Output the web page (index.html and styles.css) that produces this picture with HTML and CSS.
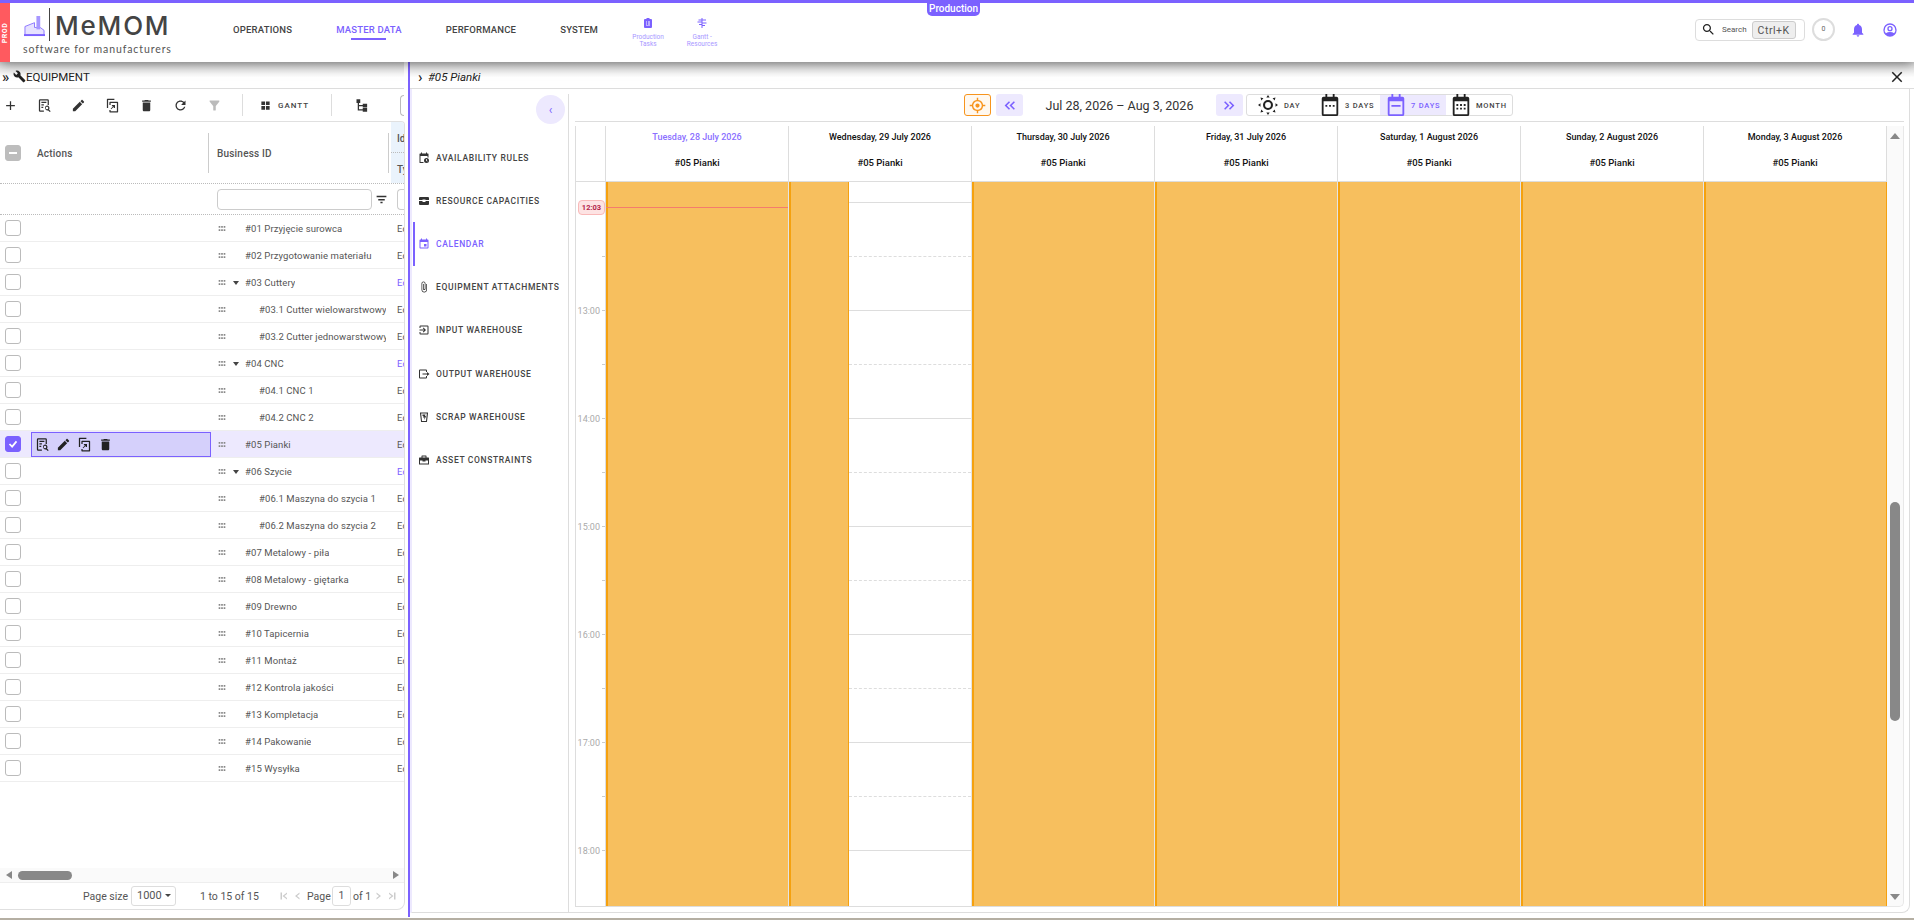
FILE: index.html
```html
<!DOCTYPE html>
<html lang="en">
<head>
    <meta charset="UTF-8">
    <title>MeMOM - Equipment</title>
    <link rel="stylesheet" href="styles.css">
</head>
<body>
    <svg class="sprite" xmlns="http://www.w3.org/2000/svg">
        <symbol id="i-add" viewBox="0 0 24 24"><path d="M19 13h-6v6h-2v-6H5v-2h6V5h2v6h6v2z"/></symbol>
        <symbol id="i-view" viewBox="0 0 24 24"><path d="M5 2h12a2 2 0 0 1 2 2v7h-2V4H5v16h6v2H5a2 2 0 0 1-2-2V4a2 2 0 0 1 2-2zm2 4h8v2H7zm0 4h4v2H7zm0 4h3v2H7z"/><path d="M16 12a4 4 0 0 1 3.2 6.4l2.7 2.7-1.4 1.4-2.7-2.7A4 4 0 1 1 16 12zm0 2a2 2 0 1 0 0 4 2 2 0 0 0 0-4z"/></symbol>
        <symbol id="i-edit" viewBox="0 0 24 24"><path d="M3 17.25V21h3.75L17.81 9.94l-3.75-3.75L3 17.25zM20.71 7.04c.39-.39.39-1.02 0-1.41l-2.34-2.34c-.39-.39-1.02-.39-1.41 0l-1.83 1.83 3.75 3.75 1.83-1.83z"/></symbol>
        <symbol id="i-copy" viewBox="0 0 24 24"><path d="M4 1h11v2H5v13H3V2a1 1 0 0 1 1-1zm4 5h12a1 1 0 0 1 1 1v15a1 1 0 0 1-1 1H8a1 1 0 0 1-1-1v-3h2v2h10V8H9v3H7V7a1 1 0 0 1 1-1zm3 5h5v5h-2v-2l-4 4-1-1 4-4h-2z"/></symbol>
        <symbol id="i-delete" viewBox="0 0 24 24"><path d="M6 19c0 1.1.9 2 2 2h8c1.1 0 2-.9 2-2V7H6v12zM19 4h-3.5l-1-1h-5l-1 1H5v2h14V4z"/></symbol>
        <symbol id="i-refresh" viewBox="0 0 24 24"><path d="M17.65 6.35C16.2 4.9 14.21 4 12 4c-4.42 0-7.99 3.58-7.99 8s3.57 8 7.99 8c3.73 0 6.84-2.55 7.73-6h-2.08c-.82 2.33-3.04 4-5.65 4-3.31 0-6-2.69-6-6s2.69-6 6-6c1.66 0 3.14.69 4.22 1.78L13 11h7V4l-2.35 2.35z"/></symbol>
        <symbol id="i-funnel" viewBox="0 0 24 24"><path d="M4.25 5.61C6.27 8.2 10 13 10 13v6c0 .55.45 1 1 1h2c.55 0 1-.45 1-1v-6s3.72-4.8 5.74-7.39A.998.998 0 0 0 18.95 4H5.04c-.83 0-1.3.95-.79 1.61z"/></symbol>
        <symbol id="i-filter" viewBox="0 0 24 24"><path d="M10 19h4v-3h-4v3zM3 5v3h18V5H3zm3 9h12v-3H6v3z"/></symbol>
        <symbol id="i-grid" viewBox="0 0 24 24"><path d="M3 3h8v8H3zM13 3h8v8h-8zM3 13h8v8H3zM13 13h8v8h-8z"/></symbol>
        <symbol id="i-tree" viewBox="0 0 24 24"><path d="M4 2h6v6H8v3h6V9h7v6h-7v-2H8v5h6v-2h7v6h-7v-2H6V8H4z"/></symbol>
        <symbol id="i-wrench" viewBox="0 0 24 24"><path d="M22.7 19l-9.1-9.1c.9-2.3.4-5-1.5-6.9-2-2-5-2.4-7.4-1.3L9 6 6 9 1.6 4.7C.4 7.1.9 10.1 2.9 12.1c1.9 1.9 4.6 2.4 6.9 1.5l9.1 9.1c.4.4 1 .4 1.4 0l2.3-2.3c.5-.4.5-1.1.1-1.4z"/></symbol>
        <symbol id="i-bell" viewBox="0 0 24 24"><path d="M12 22c1.1 0 2-.9 2-2h-4c0 1.1.89 2 2 2zm6-6v-5c0-3.07-1.64-5.64-4.5-6.32V4c0-.83-.67-1.5-1.5-1.5s-1.5.67-1.5 1.5v.68C7.63 5.36 6 7.92 6 11v5l-2 2v1h16v-1l-2-2z"/></symbol>
        <symbol id="i-search" viewBox="0 0 24 24"><path d="M15.5 14h-.79l-.28-.27C15.41 12.59 16 11.11 16 9.5 16 5.91 13.09 3 9.5 3S3 5.91 3 9.5 5.91 16 9.5 16c1.61 0 3.09-.59 4.23-1.57l.27.28v.79l5 4.99L20.49 19l-4.99-5zm-6 0C7.01 14 5 11.99 5 9.5S7.01 5 9.5 5 14 7.01 14 9.5 11.99 14 9.5 14z"/></symbol>
        <symbol id="i-user" viewBox="0 0 24 24"><path d="M12 2a10 10 0 1 0 0 20 10 10 0 0 0 0-20zm0 2a8 8 0 0 1 6.2 13A10 10 0 0 0 12 15a10 10 0 0 0-6.2 2A8 8 0 0 1 12 4zm0 2a4 4 0 1 0 0 8 4 4 0 0 0 0-8zm0 2a2 2 0 1 1 0 4 2 2 0 0 1 0-4z"/></symbol>
        <symbol id="i-clipboard" viewBox="0 0 24 24"><path d="M9 2h6v2h3a2 2 0 0 1 2 2v14a2 2 0 0 1-2 2H6a2 2 0 0 1-2-2V6a2 2 0 0 1 2-2h3zM8 9v2h2V9zm4 0v2h4V9zm-4 4v2h2v-2zm4 0v2h4v-2zm-4 4v1h8v-1z"/></symbol>
        <symbol id="i-gantt" viewBox="0 0 24 24"><path d="M11 2h2v20h-2V16H6v-2h5v-3H3V9h8V7H5V5h6zm2 3h7v2h-7zm0 6h8v2h-8zm0 5h5v2h-5z"/></symbol>
        <symbol id="i-target" viewBox="0 0 24 24"><path d="M11 1h2v3.100A8 8 0 0 1 19.900 11H23v2h-3.100A8 8 0 0 1 13 19.900V23h-2v-3.100A8 8 0 0 1 4.100 13H1v-2h3.100A8 8 0 0 1 11 4.100zm1 5a6 6 0 1 0 0 12 6 6 0 0 0 0-12zm0 3a3 3 0 1 1 0 6 3 3 0 0 1 0-6z"/></symbol>
        <symbol id="i-sun" viewBox="0 0 24 24"><path d="M12 6a6 6 0 1 1 0 12 6 6 0 0 1 0-12zm0 2.500a3.500 3.500 0 1 0 0 7 3.500 3.500 0 0 0 0-7zM12 0l2 3h-4zm0 24l-2-3h4zM0 12l3-2v4zm24 0l-3 2v-4zM3 3l3.500 1-2.500 2.500zm18 0l-1 3.500L17.500 4zM3 21l1-3.500L6.500 20zm18 0l-3.500-1 2.500-2.500z"/></symbol>
        <symbol id="i-cal3" viewBox="0 0 24 24"><path d="M7 0h2v3h6V0h2v3h2a2 2 0 0 1 2 2v17a2 2 0 0 1-2 2H5a2 2 0 0 1-2-2V5a2 2 0 0 1 2-2h2zM5 8v14h14V8zm2 4h2v2H7zm4 0h2v2h-2zm4 0h2v2h-2z"/></symbol>
        <symbol id="i-cal7" viewBox="0 0 24 24"><path d="M7 0h2v3h6V0h2v3h2a2 2 0 0 1 2 2v17a2 2 0 0 1-2 2H5a2 2 0 0 1-2-2V5a2 2 0 0 1 2-2h2zM5 8v14h14V8zm2 4h10v2H7z"/></symbol>
        <symbol id="i-calm" viewBox="0 0 24 24"><path d="M7 0h2v3h6V0h2v3h2a2 2 0 0 1 2 2v17a2 2 0 0 1-2 2H5a2 2 0 0 1-2-2V5a2 2 0 0 1 2-2h2zM5 8v14h14V8zm2 3h2v2H7zm4 0h2v2h-2zm4 0h2v2h-2zm-8 4h2v2H7zm4 0h2v2h-2zm4 0h2v2h-2z"/></symbol>
        <symbol id="i-rules" viewBox="0 0 24 24"><path d="M6 1h2v2h8V1h2v2h2a1 1 0 0 1 1 1v7h-2V8H5v12h6v2H4a1 1 0 0 1-1-1V4a1 1 0 0 1 1-1h2zm11 11a5 5 0 1 1 0 10 5 5 0 0 1 0-10zm-1 2v3.500l2.500 1.500.8-1.200-1.800-1V14z"/></symbol>
        <symbol id="i-capacity" viewBox="0 0 24 24"><path d="M4 4h16a2 2 0 0 1 2 2v4h-7v-1H9v1H2V6a2 2 0 0 1 2-2zM2 12h7v2h6v-2h7v6a2 2 0 0 1-2 2H4a2 2 0 0 1-2-2z"/></symbol>
        <symbol id="i-event" viewBox="0 0 24 24"><path d="M17 12h-5v5h5v-5zM16 1v2H8V1H6v2H5c-1.110 0-2 .9-2 2v14c0 1.100.89 2 2 2h14c1.100 0 2-.9 2-2V5c0-1.100-.9-2-2-2h-1V1h-2zm3 18H5V8h14v11z"/></symbol>
        <symbol id="i-clip" viewBox="0 0 24 24"><path d="M16.500 6v11.500c0 2.210-1.790 4-4 4s-4-1.790-4-4V5c0-1.380 1.120-2.500 2.500-2.500s2.500 1.120 2.500 2.500v10.500c0 .55-.45 1-1 1s-1-.45-1-1V6H10v9.500c0 1.380 1.120 2.500 2.500 2.500s2.500-1.120 2.500-2.500V5c0-2.210-1.790-4-4-4S7 2.790 7 5v12.500c0 3.040 2.460 5.500 5.500 5.500s5.500-2.460 5.500-5.500V6h-1.500z"/></symbol>
        <symbol id="i-input" viewBox="0 0 24 24"><path d="M5 3h14a2 2 0 0 1 2 2v14a2 2 0 0 1-2 2H5a2 2 0 0 1-2-2v-3h2v3h14V5H5v3H3V5a2 2 0 0 1 2-2zm6 4l5 5-5 5-1.400-1.400L12.200 13H3v-2h9.200L9.600 8.400z"/></symbol>
        <symbol id="i-output" viewBox="0 0 24 24"><path d="M4 3h12a2 2 0 0 1 2 2v3h-2V5H4v14h12v-3h2v3a2 2 0 0 1-2 2H4a2 2 0 0 1-2-2V5a2 2 0 0 1 2-2zm14 5l5 4-5 4v-3H9v-2h9z"/></symbol>
        <symbol id="i-scrap" viewBox="0 0 24 24"><path d="M4 3h16v2l-2 16a1 1 0 0 1-1 1H7a1 1 0 0 1-1-1L4 5zm2.300 2L8 20h8l1.700-15zM9 7h6l-1 3h2l-1 3-3 5 1-5h-3l1-3h-2z"/></symbol>
        <symbol id="i-asset" viewBox="0 0 24 24"><path d="M8 3h8a1 1 0 0 1 1 1v3h4a1 1 0 0 1 1 1v13H2V8a1 1 0 0 1 1-1h4V4a1 1 0 0 1 1-1zm1 2v2h6V5zM4 13v6h16v-6h-5v2H9v-2z"/></symbol>
        <symbol id="i-grip" viewBox="0 0 8 6"><path d="M0 0h2v2H0zM3 0h2v2H3zM6 0h2v2H6zM0 4h2v2H0zM3 4h2v2H3zM6 4h2v2H6z"/></symbol>
        <symbol id="i-close" viewBox="0 0 24 24"><path d="M19 6.410L17.590 5 12 10.590 6.410 5 5 6.410 10.590 12 5 17.590 6.410 19 12 13.410 17.590 19 19 17.590 13.410 12z"/></symbol>
        <symbol id="i-dbl-left" viewBox="0 0 24 24"><path d="M11 4l-8 8 8 8 2-2-6-6 6-6zM20 4l-8 8 8 8 2-2-6-6 6-6z"/></symbol>
        <symbol id="i-dbl-right" viewBox="0 0 24 24"><path d="M4 4l8 8-8 8-2-2 6-6-6-6zM13 4l8 8-8 8-2-2 6-6-6-6z"/></symbol>
        <symbol id="i-first" viewBox="0 0 24 24"><path d="M5 5h3v14H5zM18 5v3l-5 4 5 4v3l-9-7z"/></symbol>
        <symbol id="i-prev" viewBox="0 0 24 24"><path d="M15 5v3l-5 4 5 4v3l-9-7z"/></symbol>
        <symbol id="i-next" viewBox="0 0 24 24"><path d="M9 5v3l5 4-5 4v3l9-7z"/></symbol>
        <symbol id="i-last" viewBox="0 0 24 24"><path d="M16 5h3v14h-3zM6 5v3l5 4-5 4v3l9-7z"/></symbol>
    </svg>

    <header class="topbar">
        <div class="env-strip"><span>PROD</span></div>
        <div class="logo">
            <div class="logo-top">
                <svg class="logo-mark" viewBox="0 0 22 22"><path d="M1 20V11l10-4v5h6l4 3v5z" fill="#e6e1ff" stroke="#8a74ff" stroke-width="1"/><path d="M13 0h4v14h-4z" fill="#a797ff"/><path d="M0 19h22v2H0z" fill="#7b61ff"/></svg>
                <span class="logo-name">MeMOM</span>
            </div>
            <div class="logo-sub">software for manufacturers</div>
        </div>
        <nav class="main-nav">
            <a class="nav-link">OPERATIONS</a>
            <a class="nav-link nav-active">MASTER DATA</a>
            <a class="nav-link">PERFORMANCE</a>
            <a class="nav-link">SYSTEM</a>
        </nav>
        <div class="quick-links">
            <a class="quick-link"><svg><use href="#i-clipboard"/></svg><span>Production<br>Tasks</span></a>
            <a class="quick-link"><svg><use href="#i-gantt"/></svg><span>Gantt -<br>Resources</span></a>
        </div>
        <div class="env-tag">Production</div>
        <div class="top-right">
            <div class="search-box">
                <svg><use href="#i-search"/></svg>
                <span class="search-label">Search</span>
                <span class="kbd">Ctrl+K</span>
            </div>
            <div class="count-badge">0</div>
            <svg class="top-icon"><use href="#i-bell"/></svg>
            <svg class="top-icon"><use href="#i-user"/></svg>
        </div>
    </header>

    <main class="workspace">
        <section class="left-panel">
            <div class="panel-title">
                <span class="title-arrows">»</span>
                <svg class="title-icon"><use href="#i-wrench"/></svg>
                <span>EQUIPMENT</span>
            </div>
            <div class="toolbar">
                <svg class="tool tool-add"><use href="#i-add"/></svg>
                <svg class="tool"><use href="#i-view"/></svg>
                <svg class="tool"><use href="#i-edit"/></svg>
                <svg class="tool"><use href="#i-copy"/></svg>
                <svg class="tool"><use href="#i-delete"/></svg>
                <svg class="tool"><use href="#i-refresh"/></svg>
                <svg class="tool tool-off"><use href="#i-funnel"/></svg>
                <span class="tool-sep"></span>
                <div class="tool-gantt"><svg><use href="#i-grid"/></svg><span>GANTT</span></div>
                <span class="tool-sep"></span>
                <svg class="tool tool-tree"><use href="#i-tree"/></svg>
                <span class="tool-cut"></span>
            </div>

            <div class="grid">
                <div class="grid-head">
                    <div class="col-check"><span class="check check-mixed"></span></div>
                    <div class="col-actions head-cell">Actions</div>
                    <div class="col-name head-cell">Business ID</div>
                    <div class="col-type head-split"><span>Id</span><span>Ty</span></div>
                </div>
                <div class="grid-filter">
                    <input class="filter-input" type="text">
                    <svg class="filter-icon"><use href="#i-filter"/></svg>
                    <span class="filter-cut"></span>
                </div>
                <div class="grid-rows">
                    <div class="row"><div class="col-check"><span class="check"></span></div><div class="col-actions"></div><div class="col-name"><svg class="grip"><use href="#i-grip"/></svg><span class="caret-slot"></span><span class="name">#01 Przyjęcie surowca</span></div><div class="col-type">Equipment</div></div>
                    <div class="row"><div class="col-check"><span class="check"></span></div><div class="col-actions"></div><div class="col-name"><svg class="grip"><use href="#i-grip"/></svg><span class="caret-slot"></span><span class="name">#02 Przygotowanie materiału</span></div><div class="col-type">Equipment</div></div>
                    <div class="row"><div class="col-check"><span class="check"></span></div><div class="col-actions"></div><div class="col-name"><svg class="grip"><use href="#i-grip"/></svg><span class="caret-slot caret"></span><span class="name">#03 Cuttery</span></div><div class="col-type type-parent">Equipment</div></div>
                    <div class="row"><div class="col-check"><span class="check"></span></div><div class="col-actions"></div><div class="col-name"><svg class="grip"><use href="#i-grip"/></svg><span class="caret-slot"></span><span class="name name-child">#03.1 Cutter wielowarstwowy</span></div><div class="col-type">Equipment</div></div>
                    <div class="row"><div class="col-check"><span class="check"></span></div><div class="col-actions"></div><div class="col-name"><svg class="grip"><use href="#i-grip"/></svg><span class="caret-slot"></span><span class="name name-child">#03.2 Cutter jednowarstwowy</span></div><div class="col-type">Equipment</div></div>
                    <div class="row"><div class="col-check"><span class="check"></span></div><div class="col-actions"></div><div class="col-name"><svg class="grip"><use href="#i-grip"/></svg><span class="caret-slot caret"></span><span class="name">#04 CNC</span></div><div class="col-type type-parent">Equipment</div></div>
                    <div class="row"><div class="col-check"><span class="check"></span></div><div class="col-actions"></div><div class="col-name"><svg class="grip"><use href="#i-grip"/></svg><span class="caret-slot"></span><span class="name name-child">#04.1 CNC 1</span></div><div class="col-type">Equipment</div></div>
                    <div class="row"><div class="col-check"><span class="check"></span></div><div class="col-actions"></div><div class="col-name"><svg class="grip"><use href="#i-grip"/></svg><span class="caret-slot"></span><span class="name name-child">#04.2 CNC 2</span></div><div class="col-type">Equipment</div></div>
                    <div class="row row-selected">
                        <div class="col-check"><span class="check check-on"><svg viewBox="0 0 16 16"><path d="M4 8l3 3 5-6" fill="none" stroke="#fff" stroke-width="2"/></svg></span></div>
                        <div class="col-actions">
                            <div class="row-tools">
                                <svg><use href="#i-view"/></svg>
                                <svg><use href="#i-edit"/></svg>
                                <svg><use href="#i-copy"/></svg>
                                <svg><use href="#i-delete"/></svg>
                            </div>
                        </div>
                        <div class="col-name"><svg class="grip"><use href="#i-grip"/></svg><span class="caret-slot"></span><span class="name">#05 Pianki</span></div>
                        <div class="col-type">Equipment</div>
                    </div>
                    <div class="row"><div class="col-check"><span class="check"></span></div><div class="col-actions"></div><div class="col-name"><svg class="grip"><use href="#i-grip"/></svg><span class="caret-slot caret"></span><span class="name">#06 Szycie</span></div><div class="col-type type-parent">Equipment</div></div>
                    <div class="row"><div class="col-check"><span class="check"></span></div><div class="col-actions"></div><div class="col-name"><svg class="grip"><use href="#i-grip"/></svg><span class="caret-slot"></span><span class="name name-child">#06.1 Maszyna do szycia 1</span></div><div class="col-type">Equipment</div></div>
                    <div class="row"><div class="col-check"><span class="check"></span></div><div class="col-actions"></div><div class="col-name"><svg class="grip"><use href="#i-grip"/></svg><span class="caret-slot"></span><span class="name name-child">#06.2 Maszyna do szycia 2</span></div><div class="col-type">Equipment</div></div>
                    <div class="row"><div class="col-check"><span class="check"></span></div><div class="col-actions"></div><div class="col-name"><svg class="grip"><use href="#i-grip"/></svg><span class="caret-slot"></span><span class="name">#07 Metalowy - piła</span></div><div class="col-type">Equipment</div></div>
                    <div class="row"><div class="col-check"><span class="check"></span></div><div class="col-actions"></div><div class="col-name"><svg class="grip"><use href="#i-grip"/></svg><span class="caret-slot"></span><span class="name">#08 Metalowy - giętarka</span></div><div class="col-type">Equipment</div></div>
                    <div class="row"><div class="col-check"><span class="check"></span></div><div class="col-actions"></div><div class="col-name"><svg class="grip"><use href="#i-grip"/></svg><span class="caret-slot"></span><span class="name">#09 Drewno</span></div><div class="col-type">Equipment</div></div>
                    <div class="row"><div class="col-check"><span class="check"></span></div><div class="col-actions"></div><div class="col-name"><svg class="grip"><use href="#i-grip"/></svg><span class="caret-slot"></span><span class="name">#10 Tapicernia</span></div><div class="col-type">Equipment</div></div>
                    <div class="row"><div class="col-check"><span class="check"></span></div><div class="col-actions"></div><div class="col-name"><svg class="grip"><use href="#i-grip"/></svg><span class="caret-slot"></span><span class="name">#11 Montaż</span></div><div class="col-type">Equipment</div></div>
                    <div class="row"><div class="col-check"><span class="check"></span></div><div class="col-actions"></div><div class="col-name"><svg class="grip"><use href="#i-grip"/></svg><span class="caret-slot"></span><span class="name">#12 Kontrola jakości</span></div><div class="col-type">Equipment</div></div>
                    <div class="row"><div class="col-check"><span class="check"></span></div><div class="col-actions"></div><div class="col-name"><svg class="grip"><use href="#i-grip"/></svg><span class="caret-slot"></span><span class="name">#13 Kompletacja</span></div><div class="col-type">Equipment</div></div>
                    <div class="row"><div class="col-check"><span class="check"></span></div><div class="col-actions"></div><div class="col-name"><svg class="grip"><use href="#i-grip"/></svg><span class="caret-slot"></span><span class="name">#14 Pakowanie</span></div><div class="col-type">Equipment</div></div>
                    <div class="row"><div class="col-check"><span class="check"></span></div><div class="col-actions"></div><div class="col-name"><svg class="grip"><use href="#i-grip"/></svg><span class="caret-slot"></span><span class="name">#15 Wysyłka</span></div><div class="col-type">Equipment</div></div>
                </div>
                <div class="hscroll">
                    <span class="arrow-left"></span>
                    <span class="hscroll-thumb"></span>
                    <span class="arrow-right"></span>
                </div>
                <div class="pager">
                    <span class="pager-label">Page size</span>
                    <span class="pager-select">1000 <i class="pager-caret"></i></span>
                    <span class="pager-count">1 to 15 of 15</span>
                    <svg class="pager-nav pager-first"><use href="#i-first"/></svg>
                    <svg class="pager-nav"><use href="#i-prev"/></svg>
                    <span class="pager-page">Page</span>
                    <span class="pager-input">1</span>
                    <span class="pager-of">of 1</span>
                    <svg class="pager-nav"><use href="#i-next"/></svg>
                    <svg class="pager-nav"><use href="#i-last"/></svg>
                </div>
            </div>
        </section>

        <section class="right-panel">
            <div class="detail-title">
                <span class="detail-arrow">›</span>
                <em>#05 Pianki</em>
                <svg class="detail-close"><use href="#i-close"/></svg>
            </div>
            <div class="detail-body">
                <aside class="side-menu">
                    <button class="collapse-btn">‹</button>
                    <a class="menu-item"><svg><use href="#i-rules"/></svg>AVAILABILITY RULES</a>
                    <a class="menu-item"><svg><use href="#i-capacity"/></svg>RESOURCE CAPACITIES</a>
                    <a class="menu-item menu-active"><svg><use href="#i-event"/></svg>CALENDAR</a>
                    <a class="menu-item"><svg><use href="#i-clip"/></svg>EQUIPMENT ATTACHMENTS</a>
                    <a class="menu-item"><svg><use href="#i-input"/></svg>INPUT WAREHOUSE</a>
                    <a class="menu-item"><svg><use href="#i-output"/></svg>OUTPUT WAREHOUSE</a>
                    <a class="menu-item"><svg><use href="#i-scrap"/></svg>SCRAP WAREHOUSE</a>
                    <a class="menu-item"><svg><use href="#i-asset"/></svg>ASSET CONSTRAINTS</a>
                </aside>

                <div class="calendar-area">
                    <div class="cal-toolbar">
                        <button class="today-btn"><svg><use href="#i-target"/></svg></button>
                        <button class="step-btn"><svg><use href="#i-dbl-left"/></svg></button>
                        <span class="cal-range">Jul 28, 2026 – Aug 3, 2026</span>
                        <button class="step-btn"><svg><use href="#i-dbl-right"/></svg></button>
                        <div class="view-group">
                            <span class="view-opt view-day"><svg><use href="#i-sun"/></svg>DAY</span>
                            <span class="view-opt view-three"><svg><use href="#i-cal3"/></svg>3 DAYS</span>
                            <span class="view-opt view-seven"><svg><use href="#i-cal7"/></svg>7 DAYS</span>
                            <span class="view-opt view-month"><svg><use href="#i-calm"/></svg>MONTH</span>
                        </div>
                    </div>

                    <div class="cal">
                        <div class="cal-main">
                            <div class="cal-head">
                                <div class="time-head"></div>
                                <div class="day-head day-today"><span>Tuesday, 28 July 2026</span><b>#05 Pianki</b></div>
                                <div class="day-head"><span>Wednesday, 29 July 2026</span><b>#05 Pianki</b></div>
                                <div class="day-head"><span>Thursday, 30 July 2026</span><b>#05 Pianki</b></div>
                                <div class="day-head"><span>Friday, 31 July 2026</span><b>#05 Pianki</b></div>
                                <div class="day-head"><span>Saturday, 1 August 2026</span><b>#05 Pianki</b></div>
                                <div class="day-head"><span>Sunday, 2 August 2026</span><b>#05 Pianki</b></div>
                                <div class="day-head"><span>Monday, 3 August 2026</span><b>#05 Pianki</b></div>
                            </div>
                            <div class="cal-body">
                                <div class="time-col">
                                    <div class="time-now">12:03</div>
                                    <div class="time-slot time-first"></div>
                                    <div class="time-slot"></div>
                                    <div class="time-slot"><span>13:00</span></div>
                                    <div class="time-slot"></div>
                                    <div class="time-slot"><span>14:00</span></div>
                                    <div class="time-slot"></div>
                                    <div class="time-slot"><span>15:00</span></div>
                                    <div class="time-slot"></div>
                                    <div class="time-slot"><span>16:00</span></div>
                                    <div class="time-slot"></div>
                                    <div class="time-slot"><span>17:00</span></div>
                                    <div class="time-slot"></div>
                                    <div class="time-slot"><span>18:00</span></div>
                                </div>
                                <div class="day-col"><div class="closed"><span class="now-line"></span></div></div>
                                <div class="day-col day-split">
                                    <div class="closed closed-short"></div>
                                    <div class="free">
                                        <div class="slot slot-first"></div>
                                        <div class="slot slot-half"></div>
                                        <div class="slot"></div>
                                        <div class="slot slot-half"></div>
                                        <div class="slot"></div>
                                        <div class="slot slot-half"></div>
                                        <div class="slot"></div>
                                        <div class="slot slot-half"></div>
                                        <div class="slot"></div>
                                        <div class="slot slot-half"></div>
                                        <div class="slot"></div>
                                        <div class="slot slot-half"></div>
                                        <div class="slot"></div>
                                    </div>
                                </div>
                                <div class="day-col"><div class="closed"></div></div>
                                <div class="day-col"><div class="closed"></div></div>
                                <div class="day-col"><div class="closed"></div></div>
                                <div class="day-col"><div class="closed"></div></div>
                                <div class="day-col day-last"><div class="closed closed-last"></div></div>
                            </div>
                        </div>
                        <div class="vscroll">
                            <span class="arrow-up"></span>
                            <span class="vscroll-thumb"></span>
                            <span class="arrow-down"></span>
                        </div>
                    </div>
                </div>
            </div>
        </section>
    </main>
    <div class="page-edge"></div>
</body>
</html>
```

FILE: styles.css
```css
* {
    margin: 0;
    padding: 0;
    box-sizing: border-box;
}

body {
    font-family: Roboto, "Liberation Sans", sans-serif;
    background-color: white;
    color: #444;
    height: 100vh;
    overflow: hidden;
    display: flex;
    flex-direction: column;
}

.sprite {
    display: none;
}

svg {
    fill: currentColor;
    flex-shrink: 0;
}

button {
    font-family: inherit;
    border: none;
    cursor: pointer;
}

/* top bar */
.topbar {
    position: relative;
    z-index: 2;
    height: 62px;
    flex-shrink: 0;
    display: flex;
    background-color: white;
    border-top: 3px solid #7b61ff;
    box-shadow: 0 1px 12px rgba(0, 0, 0, 0.55);
}

.env-strip {
    width: 10px;
    background-color: #ff5a5f;
    color: white;
    display: flex;
    align-items: center;
    justify-content: center;
}

.env-strip span {
    transform: rotate(-90deg);
    font-size: 7px;
    font-weight: 700;
    letter-spacing: 0.5px;
}

.logo {
    width: 223px;
    padding: 5px 0 0 13px;
}

.logo-top {
    display: flex;
    align-items: center;
    height: 33px;
}

.logo-mark {
    width: 21px;
    height: 21px;
    margin: 3px 4px 0 1px;
}

.logo-name {
    font-family: Inter, sans-serif;
    font-weight: 500;
    font-size: 26px;
    letter-spacing: 1.8px;
    color: #444;
    height: 33px;
    line-height: 35px;
    border-left: 1px solid #444;
    padding-left: 5px;
}

.logo-sub {
    font-family: Lato, sans-serif;
    font-size: 10.5px;
    letter-spacing: 0.9px;
    color: #555;
    margin-top: 2px;
    white-space: nowrap;
}

.main-nav {
    display: flex;
    gap: 44px;
}

.nav-link {
    position: relative;
    font-size: 9.5px;
    font-weight: 500;
    letter-spacing: 0.2px;
    line-height: 53px;
    color: #444;
    white-space: nowrap;
}

.nav-active {
    color: #7b61ff;
}

.nav-active::after {
    content: "";
    position: absolute;
    left: 15px;
    right: 16px;
    bottom: 22px;
    height: 2px;
    background-color: #7b61ff;
}

.quick-links {
    display: flex;
    margin-left: 25px;
    gap: 4px;
}

.quick-link {
    width: 50px;
    padding-top: 14px;
    display: flex;
    flex-direction: column;
    align-items: center;
    color: #7b61ff;
}

.quick-link svg {
    width: 12px;
    height: 12px;
}

.quick-link span {
    font-size: 6.5px;
    line-height: 7px;
    margin-top: 5px;
    text-align: center;
    color: #a897ff;
}

.env-tag {
    position: absolute;
    top: 0;
    left: 927px;
    width: 53px;
    height: 13px;
    line-height: 12px;
    text-align: center;
    font-size: 10px;
    font-weight: 500;
    color: white;
    background-color: #7b61ff;
    border-radius: 0 0 5px 5px;
}

.top-right {
    margin-left: auto;
    display: flex;
    align-items: center;
    height: 53px;
    padding: 0 16px 0 0;
}

.search-box {
    width: 110px;
    height: 22px;
    border: 1px solid #ddd;
    border-radius: 4px;
    display: flex;
    align-items: center;
    padding-left: 5px;
    color: #222;
}

.search-box svg {
    width: 15px;
    height: 15px;
}

.search-label {
    font-size: 8px;
    color: #555;
    margin-left: 6px;
}

.kbd {
    margin-left: 5px;
    width: 44px;
    height: 18px;
    line-height: 17px;
    text-align: center;
    font-size: 10.5px;
    letter-spacing: 0.5px;
    color: #555;
    background-color: #eee;
    border: 1px solid #ccc;
    border-radius: 3px;
}

.count-badge {
    width: 23px;
    height: 23px;
    margin-left: 7px;
    margin-right: -1px;
    border: 2px solid #ddd;
    border-radius: 50%;
    text-align: center;
    line-height: 19px;
    font-size: 7px;
    color: #666;
}

.top-icon {
    width: 16px;
    height: 16px;
    margin-left: 16px;
    color: #7b61ff;
}

/* main split */
.workspace {
    flex: 1;
    min-height: 0;
    display: flex;
}

.left-panel {
    width: 410px;
    flex-shrink: 0;
    display: flex;
    flex-direction: column;
    border-right: 2px solid #7b61ff;
    padding-right: 3px;
}

.panel-title {
    height: 27px;
    display: flex;
    align-items: center;
    font-size: 11.5px;
    color: #222;
    border-bottom: 1px solid #ddd;
    padding: 3px 0 0 2px;
    margin-right: 1px;
    background: linear-gradient(#dcdcdc, white 60%);
}

.title-arrows {
    width: 11px;
    font-size: 15px;
    font-weight: 500;
    line-height: 12px;
}

.title-icon {
    width: 13px;
    height: 13px;
    color: #222;
}

.toolbar {
    height: 32px;
    display: flex;
    align-items: center;
    padding-left: 3px;
    color: #333;
}

.tool {
    width: 15px;
    height: 15px;
    margin-right: 19px;
}

.tool-off {
    color: #bbb;
    margin-right: 20px;
}

.tool-sep {
    width: 1px;
    height: 22px;
    background-color: #ddd;
}

.tool-gantt {
    display: flex;
    align-items: center;
    padding-left: 17px;
    width: 88px;
    font-size: 8px;
    font-weight: 500;
    letter-spacing: 1px;
    color: #444;
}

.tool-gantt svg {
    width: 11px;
    height: 11px;
    margin-right: 7px;
    color: #333;
}

.tool-tree {
    margin: 0 0 0 22px;
}

.tool-cut {
    margin-left: 31px;
    width: 4px;
    height: 21px;
    flex-shrink: 0;
    border: 1px solid #bbb;
    border-right: none;
    border-radius: 4px 0 0 4px;
}

/* equipment grid */
.grid {
    flex: 1;
    min-height: 0;
    display: flex;
    flex-direction: column;
    border: 1px solid #e0e0e0;
    border-left: none;
    border-radius: 0 4px 8px 0;
    margin-bottom: 7px;
    overflow: hidden;
    font-size: 9.5px;
}

.grid-head {
    height: 62px;
    flex-shrink: 0;
    display: flex;
    align-items: center;
    border-bottom: 1px dotted #bbb;
}

.col-check {
    width: 31px;
    padding-left: 5px;
    flex-shrink: 0;
    display: flex;
    align-items: center;
}

.col-actions {
    width: 178px;
    flex-shrink: 0;
    height: 100%;
    display: flex;
    align-items: center;
}

.col-name {
    width: 180px;
    flex-shrink: 0;
    display: flex;
    align-items: center;
    padding: 0 3px 0 9px;
    overflow: hidden;
    white-space: nowrap;
    height: 100%;
    color: #555;
}

.name {
    min-width: 0;
    overflow: hidden;
}

.col-type {
    flex: 1;
    min-width: 0;
    padding-left: 8px;
    overflow: hidden;
    white-space: nowrap;
    color: #555;
}

.type-parent {
    color: #7b61ff;
}

.head-cell {
    height: 40px;
    font-weight: 500;
    font-size: 10px;
    letter-spacing: 0.2px;
    color: #555;
    padding-top: 2px;
    padding-left: 6px;
}

.head-cell.col-actions {
    border-right: 1px solid #ccc;
}

.head-cell.col-name {
    padding-left: 8px;
    border-right: 1px solid #ccc;
}

.head-split {
    align-self: stretch;
    background-color: #eaf3fc;
    font-weight: 500;
    font-size: 10px;
    display: flex;
    flex-direction: column;
    margin-left: 2px;
    padding-left: 6px;
}

.head-split span {
    height: 31px;
    line-height: 33px;
}

.head-split span:first-child {
    border-bottom: 1px dotted #bbb;
    margin-left: -6px;
    padding-left: 6px;
}

.check {
    width: 16px;
    height: 16px;
    flex-shrink: 0;
    display: block;
    border: 1px solid #bbb;
    border-radius: 3px;
    background-color: white;
}

.check-mixed {
    background-color: #bdbdbd;
    border-color: #bdbdbd;
    position: relative;
}

.check-mixed::after {
    content: "";
    position: absolute;
    left: 3px;
    right: 3px;
    top: 6px;
    height: 2px;
    background-color: white;
}

.check-on {
    background-color: #7b61ff;
    border-color: #7b61ff;
}

.check-on svg {
    display: block;
    width: 14px;
    height: 14px;
}

.grid-filter {
    height: 31px;
    flex-shrink: 0;
    display: flex;
    align-items: center;
    padding-left: 217px;
    border-bottom: 1px dotted #bbb;
}

.filter-input {
    width: 155px;
    height: 21px;
    border: 1px solid #ccc;
    border-radius: 4px;
    flex-shrink: 0;
}

.filter-icon {
    width: 13px;
    height: 13px;
    margin-left: 3px;
    color: #333;
}

.filter-cut {
    width: 8px;
    height: 21px;
    margin-left: 9px;
    flex-shrink: 0;
    border: 1px solid #ccc;
    border-right: none;
    border-radius: 4px 0 0 4px;
}

.grid-rows {
    flex: 1;
    min-height: 0;
}

.row {
    height: 27px;
    display: flex;
    align-items: center;
    border-bottom: 1px solid #eee;
    letter-spacing: 0.1px;
}

.row-selected {
    background-color: #ede9fe;
}

.row-tools {
    width: 180px;
    height: 25px;
    margin-right: -2px;
    display: flex;
    align-items: center;
    gap: 6px;
    padding-left: 3px;
    background-color: #d5d0fb;
    border: 1px solid #7b61ff;
    color: #222;
}

.row-tools svg {
    width: 15px;
    height: 15px;
}

.grip {
    width: 8px;
    height: 5px;
    color: #888;
}

.caret-slot {
    width: 19px;
    flex-shrink: 0;
    display: flex;
    justify-content: center;
}

.caret::before {
    content: "";
    margin-top: 1px;
    border: 3px solid transparent;
    border-top: 4px solid #444;
    border-bottom: none;
}

.name-child {
    margin-left: 14px;
}

.hscroll {
    height: 15px;
    flex-shrink: 0;
    display: flex;
    align-items: center;
    background-color: #fafafa;
    border-bottom: 1px solid #eee;
    padding: 0 5px 0 6px;
    margin-top: auto;
}

.arrow-left {
    border: 4px solid transparent;
    border-right: 6px solid #888;
    border-left: none;
}

.arrow-right {
    margin-left: auto;
    border: 4px solid transparent;
    border-left: 6px solid #888;
    border-right: none;
}

.hscroll-thumb {
    width: 54px;
    height: 9px;
    margin-left: 6px;
    background-color: #888;
    border-radius: 5px;
}

.pager {
    height: 26px;
    flex-shrink: 0;
    display: flex;
    align-items: center;
    padding-left: 83px;
    font-size: 10.5px;
    color: #555;
    white-space: nowrap;
}

.pager-label {
    width: 42px;
    flex-shrink: 0;
}

.pager-select {
    width: 45px;
    height: 20px;
    margin-left: 6px;
    flex-shrink: 0;
    line-height: 18px;
    padding-left: 5px;
    border: 1px solid #ddd;
    border-radius: 3px;
    font-size: 11px;
}

.pager-caret {
    display: inline-block;
    vertical-align: 2px;
    margin-left: 1px;
    border: 3px solid transparent;
    border-top: 3px solid #444;
    border-bottom: none;
}

.pager-count {
    width: 55px;
    margin: 0 23px 0 24px;
    flex-shrink: 0;
}

.pager-nav {
    width: 12px;
    height: 12px;
    margin-right: 2px;
    color: #ccc;
}

.pager-page {
    width: 23px;
    margin: 0 2px 0 1px;
    flex-shrink: 0;
}

.pager-input {
    width: 19px;
    height: 20px;
    line-height: 18px;
    flex-shrink: 0;
    text-align: center;
    border: 1px solid #ddd;
    border-radius: 3px;
}

.pager-of {
    width: 19px;
    margin-left: 2px;
    flex-shrink: 0;
}

/* detail panel */
.right-panel {
    flex: 1;
    min-width: 0;
    display: flex;
    flex-direction: column;
    padding-right: 4px;
}

.detail-title {
    height: 27px;
    margin-right: -4px;
    flex-shrink: 0;
    display: flex;
    align-items: center;
    padding: 3px 8px 0 8px;
    font-size: 11.5px;
    color: #222;
    border-bottom: 1px solid #ddd;
    background: linear-gradient(#dcdcdc, white 60%);
}

.detail-arrow {
    width: 10px;
    font-size: 15px;
    font-weight: 500;
    line-height: 12px;
}

.detail-close {
    margin-left: auto;
    width: 18px;
    height: 18px;
    color: #222;
}

.detail-body {
    flex: 1;
    min-height: 0;
    display: flex;
    margin-bottom: 4px;
    border-right: 1px solid #ddd;
    border-bottom: 1px solid #ddd;
    border-left: 2px solid #ede9fe;
    border-radius: 0 0 8px 0;
}

.side-menu {
    width: 157px;
    flex-shrink: 0;
    border-right: 1px solid #ddd;
    margin-top: 5px;
    display: flex;
    flex-direction: column;
}

.collapse-btn {
    width: 29px;
    height: 29px;
    margin: 1px 0 0 124px;
    flex-shrink: 0;
    border-radius: 50%;
    background-color: #ede9fe;
    color: #7b61ff;
    font-size: 12px;
    line-height: 26px;
}

.menu-item {
    height: 43.2px;
    flex-shrink: 0;
    display: flex;
    align-items: center;
    padding-left: 3px;
    border-left: 2px solid transparent;
    margin-left: 1px;
    font-size: 8.5px;
    font-weight: 500;
    letter-spacing: 0.65px;
    color: #444;
    white-space: nowrap;
}

.menu-item:first-of-type {
    margin-top: 12px;
}

.menu-item svg {
    width: 12px;
    height: 12px;
    margin-right: 6px;
    color: #333;
}

.menu-active {
    color: #7b61ff;
    border-left-color: #7b61ff;
}

.menu-active svg {
    color: #7b61ff;
}

/* calendar */
.calendar-area {
    flex: 1;
    min-width: 0;
    display: flex;
    flex-direction: column;
    padding: 0 5px 0 6px;
}

.cal-toolbar {
    height: 33px;
    flex-shrink: 0;
    display: flex;
    align-items: center;
    padding-left: 389px;
    border-bottom: 1px solid #ddd;
}

.today-btn {
    width: 27px;
    height: 22px;
    display: flex;
    align-items: center;
    justify-content: center;
    background-color: #fff8ef;
    border: 1px solid #f7941d;
    border-radius: 3px;
    color: #f7941d;
}

.today-btn svg {
    width: 17px;
    height: 17px;
}

.step-btn {
    width: 27px;
    height: 22px;
    margin-left: 5px;
    display: flex;
    align-items: center;
    justify-content: center;
    background-color: #ede9fe;
    color: #7b61ff;
    border-radius: 3px;
}

.step-btn svg {
    width: 13px;
    height: 13px;
}

.cal-range {
    width: 188px;
    text-align: center;
    padding-left: 5px;
    font-size: 12.5px;
    color: #333;
    white-space: nowrap;
}

.view-group {
    width: 267px;
    height: 22px;
    margin-left: 3px;
    display: flex;
    align-items: center;
    border: 1px solid #ddd;
    border-radius: 3px;
    font-size: 7.5px;
    font-weight: 500;
    letter-spacing: 0.8px;
    color: #444;
}

.view-opt {
    height: 20px;
    display: flex;
    align-items: center;
    white-space: nowrap;
}

.view-opt svg {
    width: 22px;
    height: 22px;
    margin-right: 4px;
    color: #222;
}

.view-day {
    padding-left: 11px;
    width: 72px;
}

.view-opt.view-day svg {
    width: 20px;
    height: 20px;
    margin-right: 6px;
}

.view-three {
    width: 61px;
}

.view-seven {
    width: 66px;
    padding-left: 5px;
    background-color: #ede9fe;
    color: #7b61ff;
}

.view-opt.view-seven svg {
    color: #7b61ff;
}

.view-month {
    padding-left: 4px;
}

.cal {
    flex: 1;
    min-height: 0;
    margin-top: 4px;
    margin-bottom: 5px;
    display: flex;
    width: 1329px;
    overflow: hidden;
}

.cal-main {
    width: 1312px;
    flex-shrink: 0;
    display: flex;
    flex-direction: column;
    border-left: 1px solid #ddd;
    border-bottom: 1px solid #ddd;
}

.cal-head {
    height: 56px;
    flex-shrink: 0;
    display: flex;
    border-bottom: 1px solid #ddd;
}

.time-head {
    width: 30px;
    border-right: 1px solid #ddd;
}

.day-head {
    width: 183px;
    border-right: 1px solid #ddd;
    text-align: center;
    display: flex;
    flex-direction: column;
    color: #111;
}

.day-head span {
    font-size: 9px;
    font-weight: 500;
    margin-top: 5px;
    line-height: 12px;
}

.day-head b {
    font-size: 9.5px;
    font-weight: 500;
    margin-top: 14px;
    line-height: 12px;
}

.day-today span {
    color: #8b70ff;
}

.cal-body {
    flex: 1;
    min-height: 0;
    display: flex;
}

.time-col {
    position: relative;
    width: 30px;
    flex-shrink: 0;
    border-right: 1px solid #ddd;
}

.time-now {
    position: absolute;
    left: 2px;
    top: 18px;
    width: 27px;
    height: 15px;
    line-height: 13px;
    text-align: center;
    font-size: 7.5px;
    font-weight: 700;
    color: #b3244a;
    background-color: #fde3e3;
    border: 1px solid #f9b9b9;
    border-radius: 4px;
}

.time-slot {
    height: 54px;
    display: flex;
    justify-content: flex-end;
    align-items: flex-end;
    background: linear-gradient(#ccc, #ccc) right bottom / 3px 1px no-repeat;
}

.time-first {
    height: 21px;
    background: none;
}

.time-slot span {
    font-size: 9px;
    line-height: 12px;
    color: #aaa;
    margin: 0 5px -6px 0;
}

.day-col {
    width: 183px;
    flex-shrink: 0;
    display: flex;
    border-right: 1px solid #e4e4e4;
}

.closed {
    position: relative;
    flex: 1;
    background-color: #f7bf5e;
    border-left: 2px solid #f5a10f;
}

.closed-short {
    flex: none;
    width: 60px;
    border-right: 1px solid #f5a10f;
}

.closed-last {
    border-right: 1px solid #f5a10f;
}

.day-last {
    border-right: none;
}

.now-line {
    position: absolute;
    left: -2px;
    right: 0;
    top: 25px;
    height: 1px;
    background-color: #f47c6c;
}

.free {
    flex: 1;
}

.slot {
    height: 54px;
    border-bottom: 1px solid #ddd;
}

.slot-first {
    height: 21px;
}

.slot-half {
    border-bottom: 1px dashed #ddd;
}

.vscroll {
    flex: 1;
    display: flex;
    flex-direction: column;
    align-items: center;
    background-color: #fafafa;
    border-right: 1px solid #e8e8e8;
    border-bottom: 1px solid #e8e8e8;
    border-radius: 0 0 5px 0;
    padding: 7px 0 6px;
}

.arrow-up {
    border: 5px solid transparent;
    border-bottom: 6px solid #888;
    border-top: none;
}

.arrow-down {
    margin-top: auto;
    border: 5px solid transparent;
    border-top: 6px solid #888;
    border-bottom: none;
}

.vscroll-thumb {
    width: 10px;
    height: 219px;
    margin-top: 363px;
    background-color: #888;
    border-radius: 5px;
}

.page-edge {
    height: 3px;
    flex-shrink: 0;
    background-color: #b5afa3;
    border-top: 1px solid white;
}
```
